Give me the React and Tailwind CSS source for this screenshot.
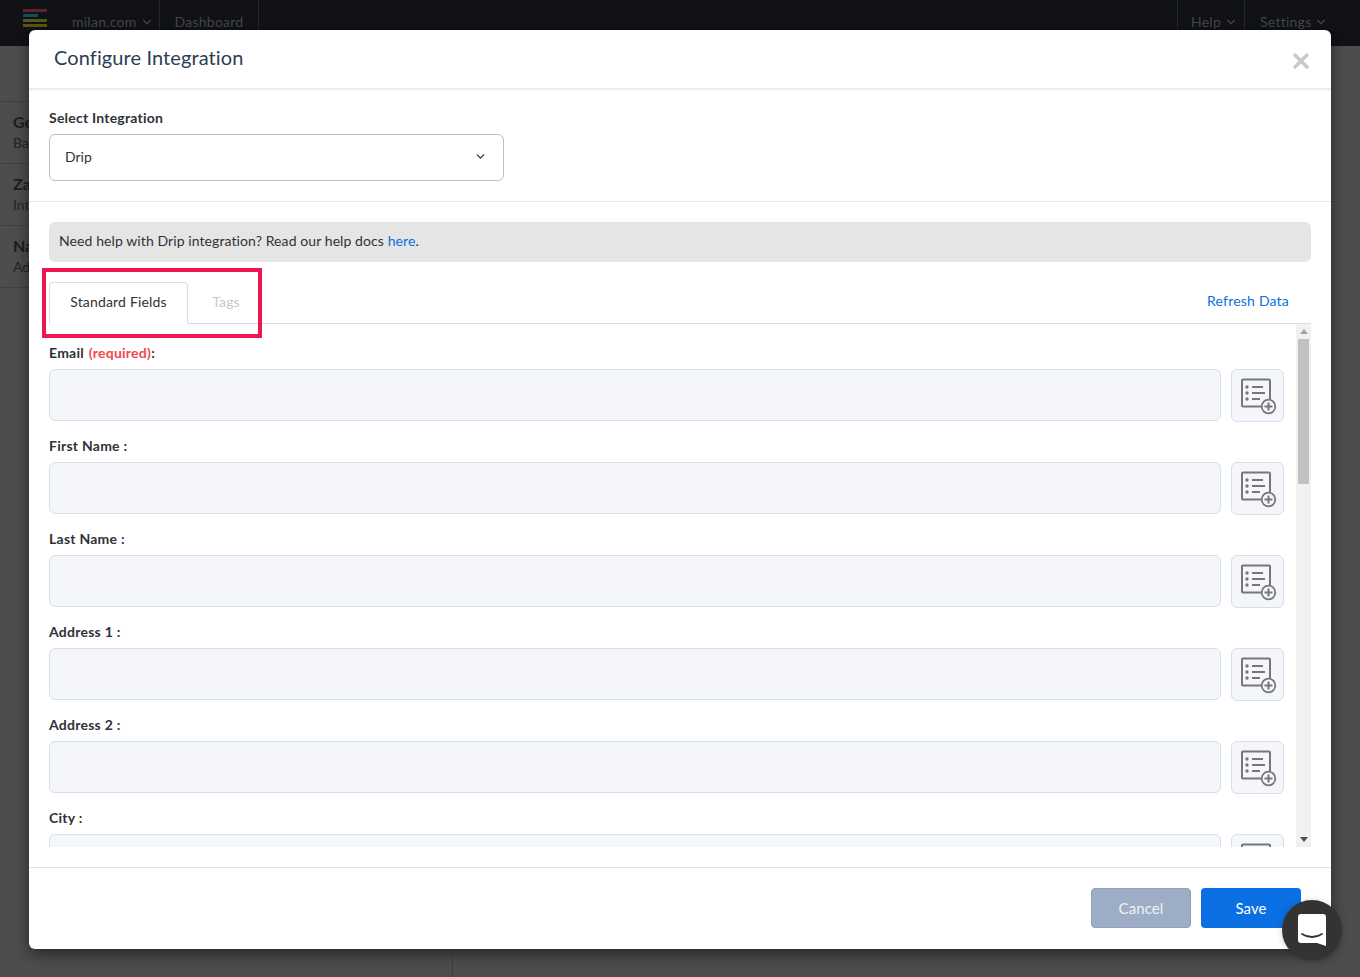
import React from 'react';
import { ChevronDown, X } from 'lucide-react';

const font = { fontFamily: '"Lato", "Open Sans", sans-serif' };

const FIELDS = [
  'First Name', 'Last Name', 'Address 1', 'Address 2', 'City',
];

const ListPlus = () => (
  <svg width="36" height="36" viewBox="0 1 36 36" fill="none" stroke="#777" strokeWidth="2" className="overflow-visible">
    <path d="M23 29.500H3a1 1 0 0 1-1-1V3.500a1 1 0 0 1 1-1h26a1 1 0 0 1 1 1V22" />
    <circle cx="7" cy="10" r="1.700" fill="#777" stroke="none" />
    <circle cx="7" cy="16" r="1.700" fill="#777" stroke="none" />
    <circle cx="7" cy="22" r="1.700" fill="#777" stroke="none" />
    <path d="M12 10h11M12 16h13M12 22h8" />
    <circle cx="28.500" cy="29.500" r="6.800" fill="#f4f6fa" strokeWidth="1.800" />
    <path d="M28.500 25.500v8M24.500 29.500h8" />
  </svg>
);

const Field = ({ label, required }) => (
  <div className="h-[93px] shrink-0">
    <div className="h-[26px] text-sm leading-[20px] font-bold tracking-[0.25px] text-[#2f3337]">
      {required ? (
        <>
          {label} <span className="ml-px text-[#f0484f]">(required)</span>:
        </>
      ) : (
        `${label} :`
      )}
    </div>
    <div className="flex gap-2.5">
      <div className="h-[52px] w-[1172px] rounded-md border border-[#d3dfec] bg-[#f4f6fa]" />
      <div className="flex h-[53px] w-[53px] items-center justify-center rounded-md border border-[#d3dfec] bg-[#f4f6fa]">
        <ListPlus />
      </div>
    </div>
  </div>
);

const SideRow = ({ title, sub }) => (
  <div className="h-[62px] border-b border-[#3f403f] pl-[13px] pt-[10px]">
    <div className="text-base leading-[20px] font-bold text-[#1c1d1d]">{title}</div>
    <div className="text-sm leading-[22px] text-[#232424]">{sub}</div>
  </div>
);

const NavItem = ({ children, className = '' }) => (
  <div className={`flex h-full items-center pb-0.5 text-sm tracking-[0.25px] text-[#44484c] ${className}`}>
    {children}
  </div>
);

export default function App() {
  return (
    <div className="relative h-[977px] w-[1360px] overflow-hidden bg-[#4c4d4c]" style={font}>
      {/* Page behind the dialog */}
      <div className="flex h-[46px] bg-[#101215] pr-[12px]">
        <div className="flex w-[72px] flex-col gap-[2px] pl-[23px] pt-[9px]">
          <div className="h-[3px] w-6 bg-[#5c2230]" />
          <div className="h-[3px] w-[15px] bg-[#174a5c]" />
          <div className="h-[3px] w-6 bg-[#4f5a14]" />
          <div className="h-[3px] w-6 bg-[#5d5412]" />
        </div>
        <NavItem className="w-[88px] gap-[3px] border-r border-[#23262a]">
          <span>milan.com</span>
          <ChevronDown size={14} />
        </NavItem>
        <NavItem className="w-[99px] justify-center border-r border-[#23262a]">Dashboard</NavItem>
        <div className="flex-1" />
        <NavItem className="w-[68px] gap-[3px] border-x border-[#23262a] pl-[13px]">
          <span>Help</span>
          <ChevronDown size={14} />
        </NavItem>
        <NavItem className="w-[103px] gap-[3px] pl-[15px]">
          <span>Settings</span>
          <ChevronDown size={14} />
        </NavItem>
      </div>
      <div className="flex h-[931px]">
        <div className="w-[453px] border-r border-[#3f403f] pt-[55px]">
          <div className="border-t border-[#3f403f]">
            <SideRow title="General" sub="Basic settings" />
            <SideRow title="Zapier" sub="Integrations" />
            <SideRow title="Name" sub="Advanced" />
          </div>
        </div>
      </div>

      {/* Dialog */}
      <div className="absolute left-[29px] top-[30px] flex h-[919px] w-[1302px] flex-col rounded-md bg-white text-[#2f3337] shadow-[0_5px_15px_rgba(0,0,0,0.5)]">
        <div className="relative flex h-[59px] shrink-0 items-center border-b border-[#e8e8e8] pb-1 pl-[25px] shadow-[0_1px_3px_rgba(0,0,0,0.08)]">
          <h2 className="text-xl font-normal tracking-[0.1px] text-[#2c3e50]">Configure Integration</h2>
          <X size={24} strokeWidth={3.5} className="absolute right-[18px] top-[19px] text-[#c9c9c9]" />
        </div>

        <div className="h-[113px] shrink-0 border-b border-[#e4e7ea] px-5 pt-[19px]">
          <label className="block h-[26px] text-sm leading-[20px] font-bold tracking-[0.22px]">Select Integration</label>
          <div className="flex h-[47px] w-[455px] items-center justify-between rounded-md border border-[#b4c2d4] pb-0.5 pl-[15px] pr-4 text-sm">
            <span>Drip</span>
            <ChevronDown size={13} strokeWidth={2.5} />
          </div>
        </div>

        <div className="px-5 pt-5">
          <div className="flex h-10 items-center rounded-md bg-[#e5e5e5] pb-0.5 pl-2.5 text-sm tracking-[0.09px] text-[#2f3337]">
            <span>
              Need help with Drip integration? Read our help docs <a className="text-[#0b6fe0]">here</a>.
            </span>
          </div>

          <div className="mt-5 flex h-[42px] items-end border-b border-[#d3dfec] text-sm tracking-[0.17px]">
            <div className="-mb-px flex h-[42px] w-[139px] items-center justify-center rounded-t border border-[#d3dfec] border-b-white bg-white pb-0.5">
              Standard Fields
            </div>
            <div className="flex h-[41px] w-[76px] items-center justify-center pb-0.5 text-[#c0cad4]">Tags</div>
            <a className="ml-auto mr-[22px] self-center pb-[3px] tracking-[0.2px] text-[#0b6fe0]">Refresh Data</a>
          </div>

          <div className="flex h-[523px]">
            <div className="h-full w-[1247px] overflow-hidden pt-[19px]">
              <Field label="Email" required />
              {FIELDS.map((f) => (
                <Field key={f} label={f} />
              ))}
            </div>
            <div className="relative w-[15px] bg-[#f1f1f1]">
              <div className="absolute left-1 top-[5px] h-0 w-0 border-x-[4px] border-b-[5px] border-x-transparent border-b-[#a3a3a3]" />
              <div className="absolute left-0.5 top-[15px] h-[145px] w-[11px] bg-[#c1c1c1]" />
              <div className="absolute bottom-[5px] left-1 h-0 w-0 border-x-[4px] border-t-[5px] border-x-transparent border-t-[#505050]" />
            </div>
          </div>
        </div>

        <div className="mt-5 flex flex-1 items-start justify-end gap-2.5 border-t border-[#e1e4e8] pr-[30px] pt-5 text-[15px] tracking-[0.1px]">
          <button className="h-10 w-[100px] rounded border border-[#8fa3bd] bg-[#9dadc5] text-[#eef1f6]">Cancel</button>
          <button className="h-10 w-[100px] rounded bg-[#0a6fe2] text-white">Save</button>
        </div>
      </div>

      {/* Annotation box around the tabs */}
      <div className="absolute left-[42px] top-[268px] h-[70px] w-[220px] border-4 border-[#ee1752]" />

      {/* Chat launcher */}
      <div className="absolute left-[1282px] top-[900px] flex h-[60px] w-[60px] items-center justify-center rounded-full bg-[#333] shadow-[0_1px_6px_rgba(0,0,0,0.2)]">
        <svg width="28" height="32" viewBox="0 0 28 32">
          <path d="M3 0h22a3 3 0 0 1 3 3v29l-9-3H3a3 3 0 0 1-3-3V3a3 3 0 0 1 3-3z" fill="#fff" />
          <path d="M4 20c6 4 14 4 20 0" fill="none" stroke="#333" strokeWidth="1.8" strokeLinecap="round" />
        </svg>
      </div>
    </div>
  );
}
